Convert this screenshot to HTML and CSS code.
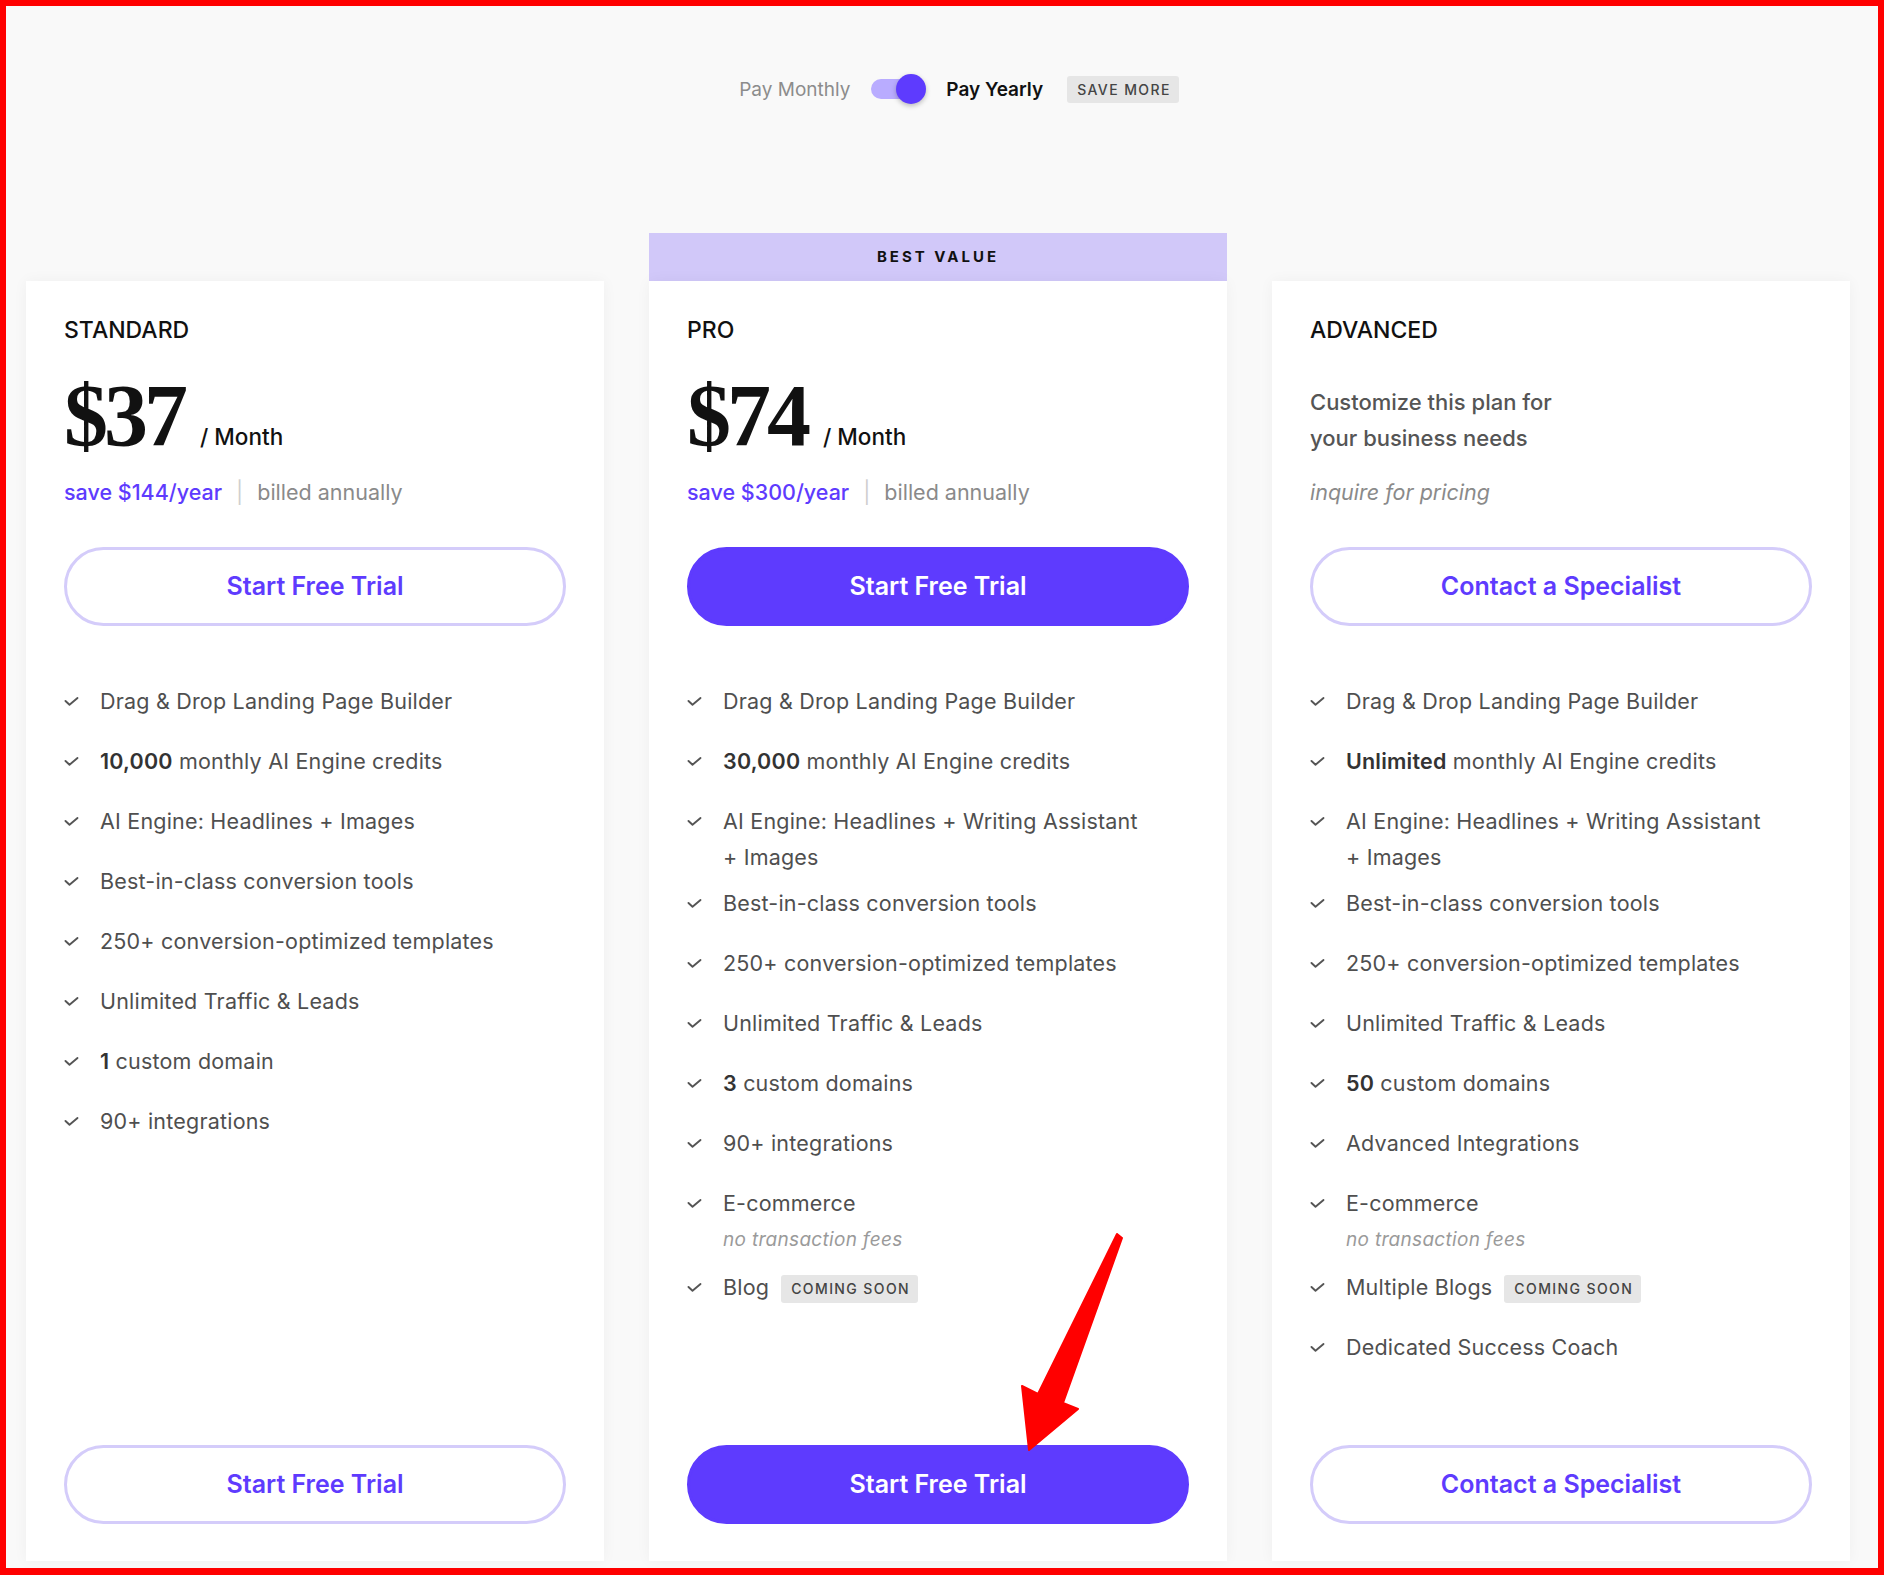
FILE: index.html
```html
<!DOCTYPE html>
<html lang="en">
<head>
    <meta charset="UTF-8">
    <meta name="viewport" content="width=device-width, initial-scale=1.0">
    <title>Pricing</title>
    <link rel="stylesheet" href="styles.css">
</head>
<body>
    <div class="frame">
        <div class="billing">
            <span class="billing-option">Pay Monthly</span>
            <span class="switch"></span>
            <span class="billing-option active">Pay Yearly</span>
            <span class="tag">SAVE MORE</span>
        </div>

        <div class="plans">
            <div class="plan">
                <h3 class="plan-name">STANDARD</h3>
                <div class="price">
                    <span class="amount">$37</span>
                    <span class="per">/ Month</span>
                </div>
                <div class="billed"><span class="save">save $144/year</span><span class="sep">|</span>billed annually</div>
                <a class="btn btn-outline">Start Free Trial</a>

                <ul class="features">
                    <li><svg class="check" viewBox="0 0 15 9"><path d="M1.5 4l4 3.7L13.5 1"/></svg><span>Drag &amp; Drop Landing Page Builder</span></li>
                    <li><svg class="check" viewBox="0 0 15 9"><path d="M1.5 4l4 3.7L13.5 1"/></svg><span><b>10,000</b> monthly AI Engine credits</span></li>
                    <li><svg class="check" viewBox="0 0 15 9"><path d="M1.5 4l4 3.7L13.5 1"/></svg><span>AI Engine: Headlines + Images</span></li>
                    <li><svg class="check" viewBox="0 0 15 9"><path d="M1.5 4l4 3.7L13.5 1"/></svg><span>Best-in-class conversion tools</span></li>
                    <li><svg class="check" viewBox="0 0 15 9"><path d="M1.5 4l4 3.7L13.5 1"/></svg><span>250+ conversion-optimized templates</span></li>
                    <li><svg class="check" viewBox="0 0 15 9"><path d="M1.5 4l4 3.7L13.5 1"/></svg><span>Unlimited Traffic &amp; Leads</span></li>
                    <li><svg class="check" viewBox="0 0 15 9"><path d="M1.5 4l4 3.7L13.5 1"/></svg><span><b>1</b> custom domain</span></li>
                    <li><svg class="check" viewBox="0 0 15 9"><path d="M1.5 4l4 3.7L13.5 1"/></svg><span>90+ integrations</span></li>
                </ul>

                <a class="btn btn-outline btn-bottom">Start Free Trial</a>
            </div>

            <div class="plan-featured">
                <div class="ribbon">BEST VALUE</div>
                <div class="plan">
                    <h3 class="plan-name">PRO</h3>
                    <div class="price">
                        <span class="amount">$74</span>
                        <span class="per">/ Month</span>
                    </div>
                    <div class="billed"><span class="save">save $300/year</span><span class="sep">|</span>billed annually</div>
                    <a class="btn btn-solid">Start Free Trial</a>

                    <ul class="features">
                        <li><svg class="check" viewBox="0 0 15 9"><path d="M1.5 4l4 3.7L13.5 1"/></svg><span>Drag &amp; Drop Landing Page Builder</span></li>
                        <li><svg class="check" viewBox="0 0 15 9"><path d="M1.5 4l4 3.7L13.5 1"/></svg><span><b>30,000</b> monthly AI Engine credits</span></li>
                        <li><svg class="check" viewBox="0 0 15 9"><path d="M1.5 4l4 3.7L13.5 1"/></svg><span>AI Engine: Headlines + Writing Assistant +&nbsp;Images</span></li>
                        <li><svg class="check" viewBox="0 0 15 9"><path d="M1.5 4l4 3.7L13.5 1"/></svg><span>Best-in-class conversion tools</span></li>
                        <li><svg class="check" viewBox="0 0 15 9"><path d="M1.5 4l4 3.7L13.5 1"/></svg><span>250+ conversion-optimized templates</span></li>
                        <li><svg class="check" viewBox="0 0 15 9"><path d="M1.5 4l4 3.7L13.5 1"/></svg><span>Unlimited Traffic &amp; Leads</span></li>
                        <li><svg class="check" viewBox="0 0 15 9"><path d="M1.5 4l4 3.7L13.5 1"/></svg><span><b>3</b> custom domains</span></li>
                        <li><svg class="check" viewBox="0 0 15 9"><path d="M1.5 4l4 3.7L13.5 1"/></svg><span>90+ integrations</span></li>
                        <li><svg class="check" viewBox="0 0 15 9"><path d="M1.5 4l4 3.7L13.5 1"/></svg><span>E-commerce<em class="note">no transaction fees</em></span></li>
                        <li><svg class="check" viewBox="0 0 15 9"><path d="M1.5 4l4 3.7L13.5 1"/></svg><span>Blog<span class="tag">COMING SOON</span></span></li>
                    </ul>

                    <a class="btn btn-solid btn-bottom">Start Free Trial</a>
                </div>
            </div>

            <div class="plan">
                <h3 class="plan-name">ADVANCED</h3>
                <p class="plan-desc">Customize this plan for<br>your business needs</p>
                <div class="billed inquire">inquire for pricing</div>
                <a class="btn btn-outline">Contact a Specialist</a>

                <ul class="features">
                    <li><svg class="check" viewBox="0 0 15 9"><path d="M1.5 4l4 3.7L13.5 1"/></svg><span>Drag &amp; Drop Landing Page Builder</span></li>
                    <li><svg class="check" viewBox="0 0 15 9"><path d="M1.5 4l4 3.7L13.5 1"/></svg><span><b>Unlimited</b> monthly AI Engine credits</span></li>
                    <li><svg class="check" viewBox="0 0 15 9"><path d="M1.5 4l4 3.7L13.5 1"/></svg><span>AI Engine: Headlines + Writing Assistant +&nbsp;Images</span></li>
                    <li><svg class="check" viewBox="0 0 15 9"><path d="M1.5 4l4 3.7L13.5 1"/></svg><span>Best-in-class conversion tools</span></li>
                    <li><svg class="check" viewBox="0 0 15 9"><path d="M1.5 4l4 3.7L13.5 1"/></svg><span>250+ conversion-optimized templates</span></li>
                    <li><svg class="check" viewBox="0 0 15 9"><path d="M1.5 4l4 3.7L13.5 1"/></svg><span>Unlimited Traffic &amp; Leads</span></li>
                    <li><svg class="check" viewBox="0 0 15 9"><path d="M1.5 4l4 3.7L13.5 1"/></svg><span><b>50</b> custom domains</span></li>
                    <li><svg class="check" viewBox="0 0 15 9"><path d="M1.5 4l4 3.7L13.5 1"/></svg><span>Advanced Integrations</span></li>
                    <li><svg class="check" viewBox="0 0 15 9"><path d="M1.5 4l4 3.7L13.5 1"/></svg><span>E-commerce<em class="note">no transaction fees</em></span></li>
                    <li><svg class="check" viewBox="0 0 15 9"><path d="M1.5 4l4 3.7L13.5 1"/></svg><span>Multiple Blogs<span class="tag">COMING SOON</span></span></li>
                    <li><svg class="check" viewBox="0 0 15 9"><path d="M1.5 4l4 3.7L13.5 1"/></svg><span>Dedicated Success Coach</span></li>
                </ul>

                <a class="btn btn-outline btn-bottom">Contact a Specialist</a>
            </div>
        </div>
    </div>

    <!-- annotation arrow -->
    <svg class="arrow" width="1884" height="1575" viewBox="0 0 1884 1575">
        <polygon points="1117,1234 1122,1238 1063,1403 1078,1409 1029,1450 1022,1386 1038,1394"/>
    </svg>
</body>
</html>
```

FILE: styles.css
```css
* {
    box-sizing: border-box;
    margin: 0;
    padding: 0;
}

body {
    font-family: Inter, 'Noto Sans', sans-serif;
    color: #4f4f4f;
    background: #f9f9f9;
}

.frame {
    height: 1575px;
    overflow: hidden;
    border: 6px solid #ff0000;
    border-bottom-width: 7px;
    background: #f9f9f9;
}

/* billing switch */
.billing {
    display: flex;
    align-items: center;
    justify-content: center;
    padding: 68px 0 0 34px;
    font-size: 19px;
}

.billing-option {
    color: #8c8c8c;
}

.billing-option.active {
    color: #111;
    font-weight: 600;
}

.switch {
    position: relative;
    width: 55px;
    height: 30px;
    margin: 0 20px 0 21px;
}

.switch::before {
    content: '';
    position: absolute;
    left: 0;
    top: 5px;
    width: 48px;
    height: 20px;
    border-radius: 10px;
    background: #b9acff;
}

.switch::after {
    content: '';
    position: absolute;
    right: 0;
    top: 0;
    width: 30px;
    height: 30px;
    border-radius: 50%;
    background: #5e3bfe;
    box-shadow: 0 2px 5px rgba(0,0,0,0.25);
}

.tag {
    display: inline-block;
    background: #e6e6e6;
    color: #444;
    font-size: 14px;
    font-weight: 500;
    letter-spacing: 1.4px;
    line-height: 27px;
    padding: 0 8px 0 10px;
    border-radius: 3px;
    margin-left: 24px;
}

/* plans */
.plans {
    display: grid;
    grid-template-columns: repeat(3, 578px);
    gap: 45px;
    margin: 129px 0 0 20px;
}

.plan {
    display: flex;
    flex-direction: column;
    min-height: 1280px;
    background: white;
    padding: 35px 38px 37px;
    box-shadow: 0 0 14px rgba(0,0,0,0.045);
}

.plans > .plan {
    margin-top: 48px;
}

.plan-featured {
    display: flex;
    flex-direction: column;
}

.ribbon {
    height: 48px;
    line-height: 48px;
    text-align: center;
    background: #d1c8f9;
    color: #111;
    font-size: 15px;
    font-weight: 700;
    letter-spacing: 3px;
}

.plan-name {
    font-size: 23px;
    font-weight: 500;
    line-height: 28px;
    color: #111;
}

.price {
    display: flex;
    align-items: baseline;
    gap: 16px;
    margin-top: 28px;
    color: #111;
}

.amount {
    font-family: 'Liberation Serif', serif;
    font-weight: 700;
    font-size: 88px;
    line-height: 88px;
    letter-spacing: -4px;
}

.per {
    font-size: 22.5px;
    font-weight: 500;
    line-height: 30px;
}

.billed {
    margin-top: 17px;
    font-size: 21.5px;
    line-height: 30px;
    color: #8a8a8a;
}

.save {
    color: #5e3bfe;
    font-weight: 500;
}

.sep {
    color: #cfcfcf;
    margin: 0 14px;
}

.plan-desc {
    margin-top: 40px;
    font-size: 22px;
    font-weight: 500;
    line-height: 36px;
    color: #555;
}

.inquire {
    margin-top: 21px;
    font-style: italic;
}

.btn {
    display: block;
    height: 79px;
    line-height: 73px;
    margin-top: 40px;
    border: 3px solid #d4ccfa;
    border-radius: 40px;
    text-align: center;
    font-size: 25px;
    font-weight: 600;
    color: #5e3bfe;
    cursor: pointer;
}

.btn-solid {
    background: #5e3bfe;
    border-color: #5e3bfe;
    color: white;
}

.btn-bottom {
    margin-top: auto;
}

.features {
    list-style: none;
    margin: 57px 0 40px;
    font-size: 21.5px;
    letter-spacing: 0.2px;
    line-height: 36px;
}

.features li {
    display: flex;
    min-height: 50px;
    margin-bottom: 10px;
}

.features b {
    font-weight: 600;
    color: #333;
}

.check {
    flex: none;
    width: 15px;
    height: 9px;
    margin: 14px 21px 0 0;
    fill: none;
    stroke: #555;
    stroke-width: 1.9;
    stroke-linecap: round;
    stroke-linejoin: round;
}

.note {
    display: block;
    font-size: 19px;
    line-height: 38px;
    letter-spacing: 0.3px;
    color: #9a9a9a;
}

.features .tag {
    margin-left: 12px;
    line-height: 28px;
    vertical-align: 1px;
}

.arrow {
    position: absolute;
    left: 0;
    top: 0;
    pointer-events: none;
}

.arrow polygon {
    fill: #ff0000;
    stroke: #ff0000;
    stroke-width: 2;
    stroke-linejoin: round;
}
```
